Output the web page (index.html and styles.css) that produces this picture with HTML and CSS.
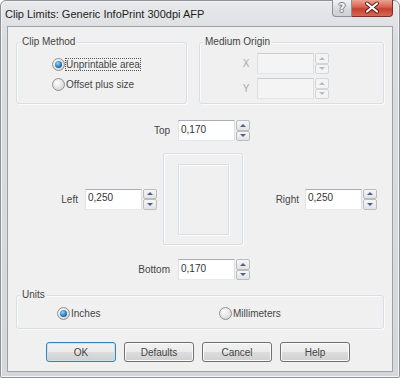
FILE: index.html
```html
<!DOCTYPE html>
<html lang="en">

<head>
  <meta charset="UTF-8">
  <meta name="viewport" content="width=device-width, initial-scale=1.0">
  <title>Clip Limits</title>
  <link rel="stylesheet" href="styles.css">
</head>

<body>
  <div class="window">
    <div class="titlebar">
      <span class="title">Clip Limits: Generic InfoPrint 300dpi AFP</span>
      <div class="caption-buttons">
        <button class="cap-help">?</button>
        <button class="cap-close">
          <svg width="40" height="16" viewBox="0 0 40 16">
            <path d="M15 3.5 L25 11.5 M25 3.5 L15 11.5" stroke="#5a1a12" stroke-width="4" stroke-linecap="round" fill="none"/>
            <path d="M15 3.5 L25 11.5 M25 3.5 L15 11.5" stroke="#fff" stroke-width="2.2" stroke-linecap="round" fill="none"/>
          </svg>
        </button>
      </div>
    </div>

    <div class="client">
      <div class="groups">
        <div class="group clip-method">
          <div class="group-title">Clip Method</div>
          <div class="group-body">
            <label class="radio-row"><span class="radio checked"></span><span class="radio-text focus">Unprintable area</span></label>
            <label class="radio-row"><span class="radio"></span><span class="radio-text">Offset plus size</span></label>
          </div>
        </div>

        <div class="group origin">
          <div class="group-title">Medium Origin</div>
          <div class="group-body">
            <div class="origin-row">
              <span class="axis">X</span>
              <input class="textbox" type="text" disabled>
              <span class="spin disabled"><span class="up"></span><span class="down"></span></span>
            </div>
            <div class="origin-row">
              <span class="axis">Y</span>
              <input class="textbox" type="text" disabled>
              <span class="spin disabled"><span class="up"></span><span class="down"></span></span>
            </div>
          </div>
        </div>
      </div>

      <div class="margins">
        <div class="edge-row">
          <label class="edge-label">Top</label>
          <input class="textbox" type="text" value="0,170">
          <span class="spin"><span class="up"></span><span class="down"></span></span>
        </div>

        <div class="middle-row">
          <label class="side-label">Left</label>
          <input class="textbox" type="text" value="0,250">
          <span class="spin"><span class="up"></span><span class="down"></span></span>

          <div class="preview">
            <div class="preview-inner"></div>
          </div>

          <label class="side-label right">Right</label>
          <input class="textbox" type="text" value="0,250">
          <span class="spin"><span class="up"></span><span class="down"></span></span>
        </div>

        <div class="edge-row bottom">
          <label class="edge-label">Bottom</label>
          <input class="textbox" type="text" value="0,170">
          <span class="spin"><span class="up"></span><span class="down"></span></span>
        </div>
      </div>

      <div class="group units">
        <div class="group-title">Units</div>
        <div class="group-body">
          <label class="radio-row inches"><span class="radio checked"></span><span class="radio-text">Inches</span></label>
          <label class="radio-row"><span class="radio"></span><span class="radio-text">Millimeters</span></label>
        </div>
      </div>

      <div class="buttons">
        <button class="btn default">OK</button>
        <button class="btn">Defaults</button>
        <button class="btn">Cancel</button>
        <button class="btn">Help</button>
      </div>
    </div>
  </div>
</body>

</html>
```

FILE: styles.css
```css
* {
  box-sizing: border-box;
}

body {
  margin: 0;
  font-family: "Liberation Sans", Arial, sans-serif;
  font-size: 10px;
  color: #464646;
  background: #fff;
}

.window {
  width: 400px;
  height: 378px;
  display: flex;
  flex-direction: column;
  padding: 0 6px 5px;
  border: 1px solid #8e9093;
  border-radius: 6px 6px 2px 2px;
  background: linear-gradient(#e8e9eb, #dadcdf 40px, #d5d7da);
  box-shadow: inset 0 0 0 1px #f3f4f5;
}

/* title bar */
.titlebar {
  height: 25px;
  display: flex;
  align-items: flex-start;
}

.title {
  margin: 7px 0 0 -2px;
  font-size: 11px;
  line-height: 13px;
  color: #1e1e1e;
}

.caption-buttons {
  margin-left: auto;
  margin-top: -1px;
  display: flex;
}

.cap-help,
.cap-close {
  height: 17px;
  padding: 0;
  margin: 0;
}

.cap-help {
  width: 20px;
  border: 1px solid #8c8f93;
  border-top: 0;
  border-radius: 0 0 0 4px;
  background: linear-gradient(#f1f2f4, #d6d9dc 60%, #cdd0d4);
  font-family: "DejaVu Sans", sans-serif;
  font-size: 12px;
  font-weight: bold;
  line-height: 14px;
  color: #f4f4f4;
  text-shadow: 1px 0 0 #7d8085, -1px 0 0 #7d8085, 0 1px 0 #7d8085, 0 -1px 0 #7d8085;
}

.cap-close {
  width: 41px;
  border: 1px solid #7c2f27;
  border-top: 0;
  border-left: 0;
  border-radius: 0 0 4px 0;
  background: linear-gradient(#e9a495, #d6604f 45%, #c63f30 55%, #d56a55);
  display: flex;
  align-items: center;
  justify-content: center;
}

.cap-close svg {
  display: block;
}

/* client area */
.client {
  flex: 1;
  border: 1px solid #9da1a6;
  background: #f0f0f0;
  padding: 15px 8px 0;
}

.groups {
  display: flex;
  gap: 12px;
}

.group {
  display: flex;
  flex-direction: column;
  border: 1px solid #d5dfe5;
  border-radius: 3px;
  box-shadow: inset 1px 1px 0 #fbfbfb, 1px 1px 0 #fbfbfb;
}

.group-title {
  align-self: flex-start;
  margin: -7px 0 0 3px;
  padding: 0 2px;
  line-height: 12px;
  background: #f0f0f0;
  color: #444;
}

.clip-method {
  width: 171px;
}

.clip-method .group-body {
  padding: 6px 0 9px 35px;
}

.origin {
  width: 185px;
}

.origin .group-body {
  padding: 5px 0 4px 40px;
}

.radio-row {
  height: 20px;
  display: flex;
  align-items: center;
}

.radio {
  position: relative;
  flex: none;
  width: 13px;
  height: 13px;
  border: 1px solid #8f9294;
  border-radius: 50%;
  background: radial-gradient(circle at 40% 35%, #ffffff, #e2e2e2 55%, #c9c9c9);
}

.radio.checked::after {
  content: "";
  position: absolute;
  left: 2px;
  top: 2px;
  width: 7px;
  height: 7px;
  border-radius: 50%;
  background: radial-gradient(circle at 40% 35%, #9ad6ff, #2a78bd 55%, #0e3f75);
}

.radio-text {
  border: 1px dotted transparent;
  line-height: 11px;
}

.radio-text.focus {
  border-color: #555;
}

.origin-row {
  display: flex;
  align-items: center;
}

.origin-row + .origin-row {
  margin-top: 4px;
}

.axis {
  width: 12px;
  margin-right: 5px;
  text-align: center;
  color: #a8a8a8;
}

/* text boxes and spinners */
.textbox {
  width: 57px;
  height: 21px;
  margin: 0;
  padding: 0 0 3px 2px;
  border: 1px solid;
  border-color: #abadb3 #dbdfe6 #e3e9ef #e2e3ea;
  background: #fff;
  font: inherit;
  color: #333;
  outline: none;
}

.textbox:disabled {
  background: #f4f4f4;
  border-color: #c9cbcf #dcdfe3 #e1e4e8 #dcdfe3;
}

.spin {
  width: 14px;
  height: 21px;
  margin-left: 1px;
  display: flex;
  flex-direction: column;
}

.spin span {
  flex: 1;
  display: flex;
  align-items: center;
  justify-content: center;
  border: 1px solid #b9bdc2;
  border-radius: 2px;
  background: linear-gradient(#f6f6f6, #e3e3e3);
}

.spin .up::before {
  content: "";
  border-left: 3px solid transparent;
  border-right: 3px solid transparent;
  border-bottom: 3px solid #4d6184;
}

.spin .down::before {
  content: "";
  border-left: 3px solid transparent;
  border-right: 3px solid transparent;
  border-top: 3px solid #4d6184;
}

.spin.disabled span {
  border-color: #d3d6d9;
  background: #f4f4f4;
}

.spin.disabled .up::before {
  border-bottom-color: #b8bcc2;
}

.spin.disabled .down::before {
  border-top-color: #b8bcc2;
}

/* margin editors */
.margins {
  margin-top: 16px;
}

.edge-row {
  display: flex;
  align-items: center;
  padding-left: 104px;
}

.edge-label {
  width: 50px;
  margin-right: 8px;
  text-align: right;
}

.edge-row.bottom {
  margin-top: 14px;
}

.middle-row {
  display: flex;
  align-items: center;
  margin-top: 12px;
  padding-left: 21px;
}

.side-label {
  width: 41px;
  margin-right: 7px;
  text-align: right;
}

.side-label.right {
  width: 40px;
  margin-left: 16px;
  margin-right: 6px;
}

.preview {
  width: 80px;
  height: 92px;
  margin-left: 6px;
  display: flex;
  align-items: center;
  justify-content: center;
  border: 1px solid #d6dfe7;
  border-radius: 2px;
  box-shadow: inset 1px 1px 0 #fbfcfd, 1px 1px 0 #fbfcfd;
}

.preview-inner {
  width: 51px;
  height: 71px;
  border: 1px solid #d6dfe7;
  border-radius: 1px;
  box-shadow: inset 1px 1px 0 #fbfcfd, 1px 1px 0 #fbfcfd;
}

/* units */
.units {
  width: 368px;
  margin-top: 15px;
}

.units .group-body {
  display: flex;
  padding: 2px 0 5px 40px;
}

.radio-row.inches {
  width: 162px;
}

/* dialog buttons */
.buttons {
  display: flex;
  gap: 8px;
  margin-top: 13px;
  padding-left: 30px;
}

.btn {
  width: 70px;
  height: 20px;
  padding: 0;
  border: 1px solid #707070;
  border-radius: 3px;
  background: linear-gradient(#f2f2f2, #ebebeb 50%, #dddddd 50%, #cfcfcf);
  box-shadow: inset 0 0 0 1px #fbfbfb;
  font: inherit;
  color: #444;
}

.btn.default {
  border-color: #3c7fb1;
  box-shadow: inset 0 0 0 1px #c4e5f6;
}
```
